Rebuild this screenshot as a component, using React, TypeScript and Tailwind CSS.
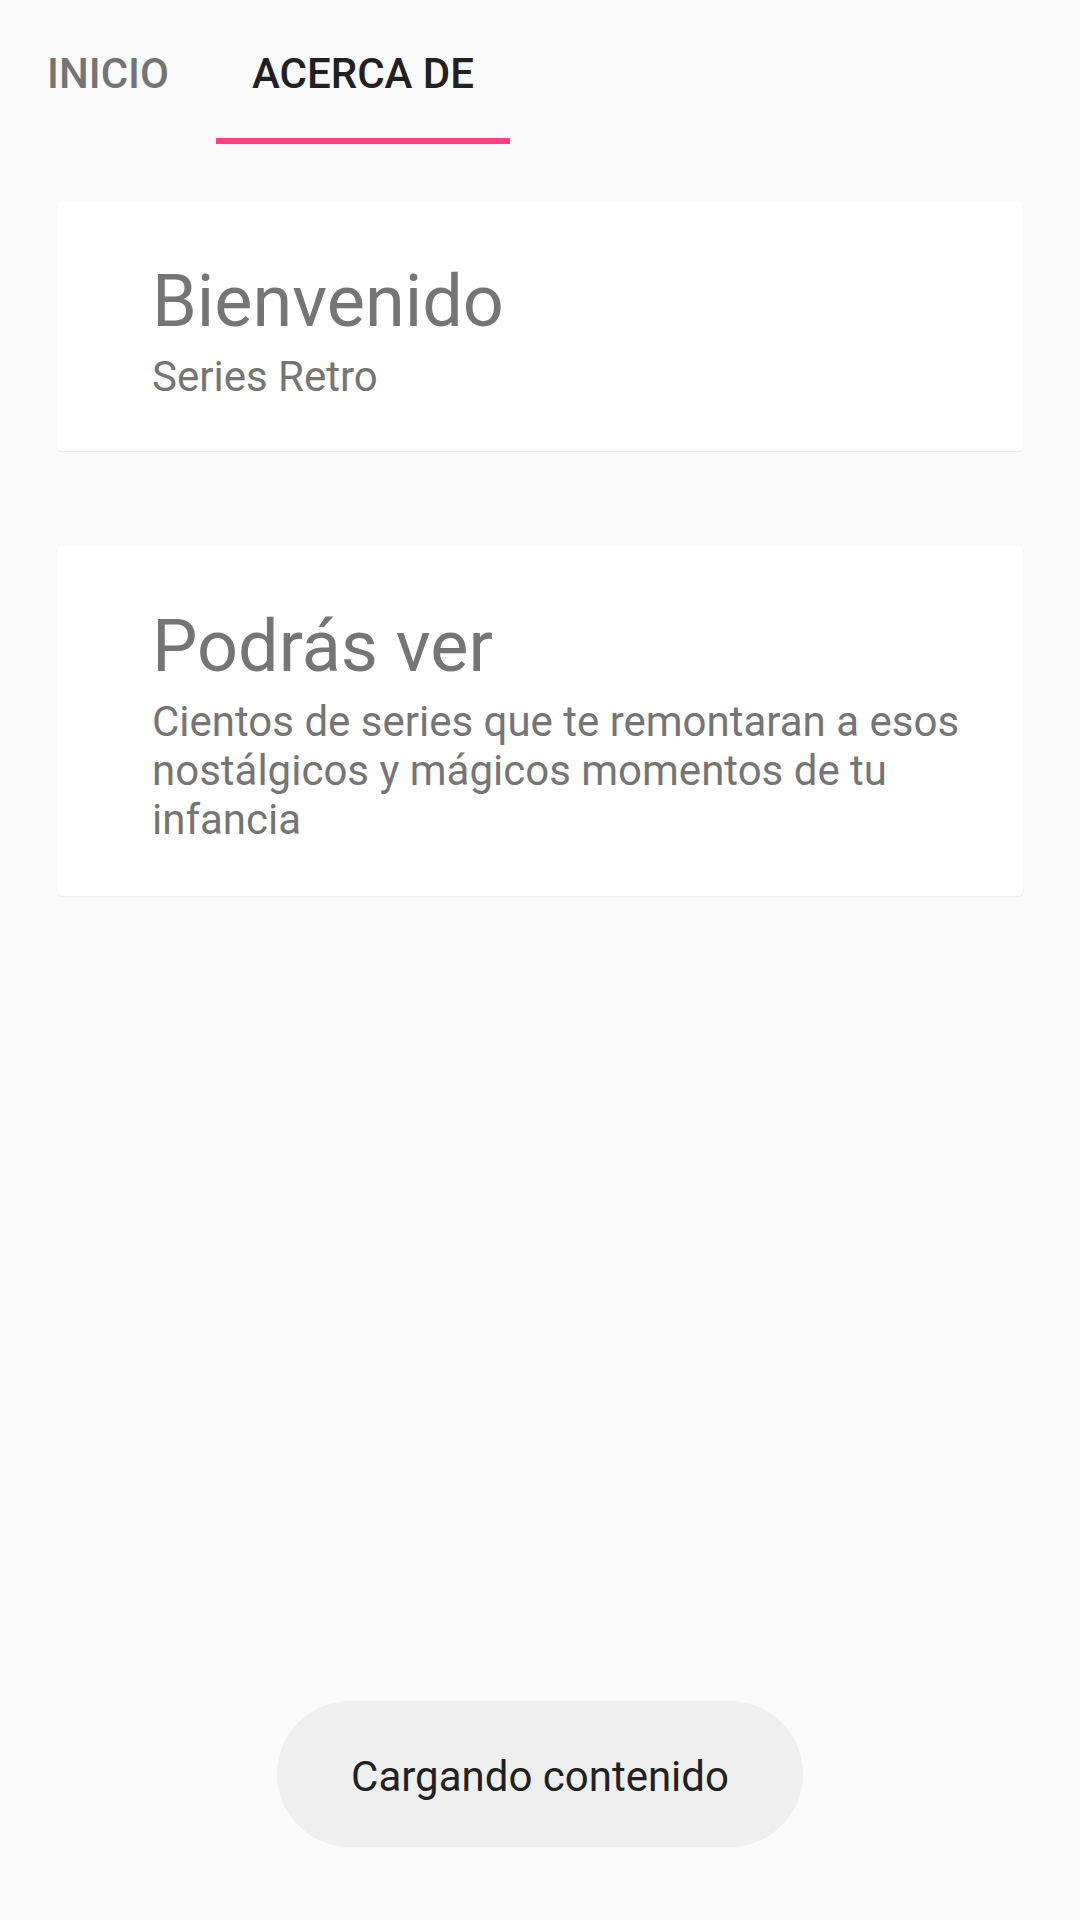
const tabs = [
  { label: 'INICIO', active: false },
  { label: 'ACERCA DE', active: true },
];

const cards = [
  { title: 'Bienvenido', body: 'Series Retro', pb: 'pb-[50px]' },
  {
    title: 'Podrás ver',
    body: 'Cientos de series que te remontaran a esos nostálgicos y mágicos momentos de tu infancia',
    pb: 'pb-[52px]',
  },
];

function TabBar() {
  return (
    <div className="flex h-[144px]">
      {tabs.map((tab) => (
        <div
          key={tab.label}
          className={`flex h-[144px] min-w-[216px] items-center justify-center border-b-[6px] px-[36px] pt-[9px] text-[42px] font-medium ${
            tab.active ? 'border-[#ff4081] text-[#212121]' : 'border-transparent text-[#757575]'
          }`}
        >
          {tab.label}
        </div>
      ))}
    </div>
  );
}

function InfoCard({ title, body, pb }: { title: string; body: string; pb: string }) {
  return (
    <div
      className={`rounded-[5px] bg-white pl-[95px] pr-[40px] pt-[59px] ${pb} shadow-[0_1px_2px_rgba(0,0,0,0.08)]`}
    >
      <h2 className="text-[72px] leading-[84px] font-normal text-[#757575]">{title}</h2>
      <p className="mt-[8px] text-[42px] leading-[49px] text-[#757575]">{body}</p>
    </div>
  );
}

export default function App() {
  return (
    <div className="relative min-h-screen w-full bg-[#fafafa] font-['Roboto','Liberation_Sans',sans-serif]">
      <TabBar />

      <div className="flex flex-col gap-[95px] px-[57px] pt-[57px]">
        {cards.map((c) => (
          <InfoCard key={c.title} title={c.title} body={c.body} pb={c.pb} />
        ))}
      </div>

      {/* toast */}
      <div className="fixed bottom-[73px] left-1/2 flex h-[146px] -translate-x-1/2 items-center rounded-full bg-[#efefef] px-[74px] pt-[4px] text-[42px] text-[#212121]">
        Cargando contenido
      </div>
    </div>
  );
}
